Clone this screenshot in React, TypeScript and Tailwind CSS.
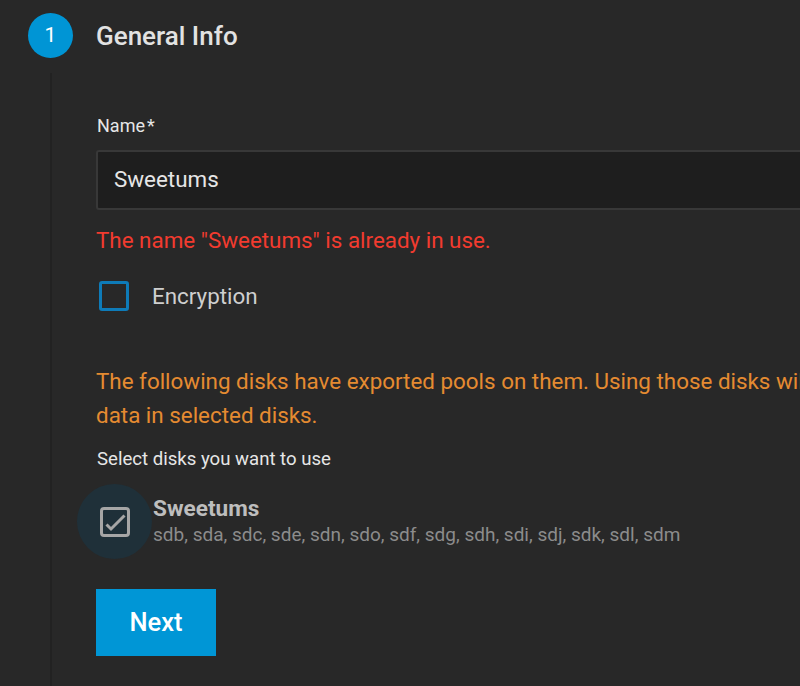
const disks = 'sdb, sda, sdc, sde, sdn, sdo, sdf, sdg, sdh, sdi, sdj, sdk, sdl, sdm';

function CheckedBox() {
  return (
    <svg viewBox="0 0 30 30" className="h-[30px] w-[30px]" fill="none" stroke="#a6a6a6">
      <rect x="1.5" y="1.5" width="27" height="27" rx="2.5" strokeWidth="3" />
      <path d="M6.5 17.5l4.5 4.5L24.5 8.5" strokeWidth="3" />
    </svg>
  );
}

export default function App() {
  return (
    <div className="h-[686px] w-full overflow-hidden bg-[#282828] font-['Roboto',sans-serif]">
      {/* Step header */}
      <div className="flex items-center pl-[28px] pt-[13px]">
        <div className="flex h-[45px] w-[45px] items-center justify-center rounded-full bg-[#0095d5] text-[21px] text-white">
          1
        </div>
        <h2 className="ml-[23px] text-[26px] font-medium leading-[30px] text-[#e2e2e2]">General Info</h2>
      </div>

      {/* Step body with the vertical connector */}
      <div className="ml-[50px] mt-[15px] w-[1100px] border-l-2 border-[#222222] pl-[44px] pt-[43px] pb-10">
        <label className="ml-px block text-[18px] leading-[20px] text-[#e6e6e6]">Name<span className="ml-[2px]">*</span></label>
        <div className="mt-[14px] flex h-[60px] items-center rounded-[3px] border-2 border-[#383838] bg-[#1e1e1e] px-[16px] text-[22.4px] text-[#e6e6e6]">
          Sweetums
        </div>
        <p className="mt-[18px] text-[22.4px] leading-[24px] text-[#f23b2f]">The name "Sweetums" is already in use.</p>

        <div className="mt-[29px] flex items-center">
          <div className="ml-[3px] h-[30px] w-[30px] rounded-[3px] border-[3px] border-[#0e7bb8]" />
          <span className="ml-[23px] text-[22.4px] leading-[24px] text-[#cfcfcf]">Encryption</span>
        </div>

        <p className="mt-[53px] text-[22.4px] leading-[34px] whitespace-nowrap text-[#e58b31]">
          The following disks have exported pools on them. Using those disks will destroy all existing
          <br />
          data in selected disks.
        </p>
        <p className="ml-px mt-[17px] text-[18.6px] leading-[20px] text-[#e6e6e6]">Select disks you want to use</p>

        <div className="mt-[15px] flex items-center">
          <div className="-ml-[19px] flex h-[75px] w-[75px] items-center justify-center rounded-full bg-[#1f3039]">
            <CheckedBox />
          </div>
          <div className="ml-px">
            <div className="text-[22.6px] font-bold leading-[24px] text-[#bdbdbd]">Sweetums</div>
            <div className="mt-[3px] text-[19px] leading-[22px] text-[#8c8c8c]">{disks}</div>
          </div>
        </div>

        <button className="mt-[30px] h-[67px] w-[120px] bg-[#0096d6] text-[25.5px] font-medium text-white">Next</button>
      </div>
    </div>
  );
}
